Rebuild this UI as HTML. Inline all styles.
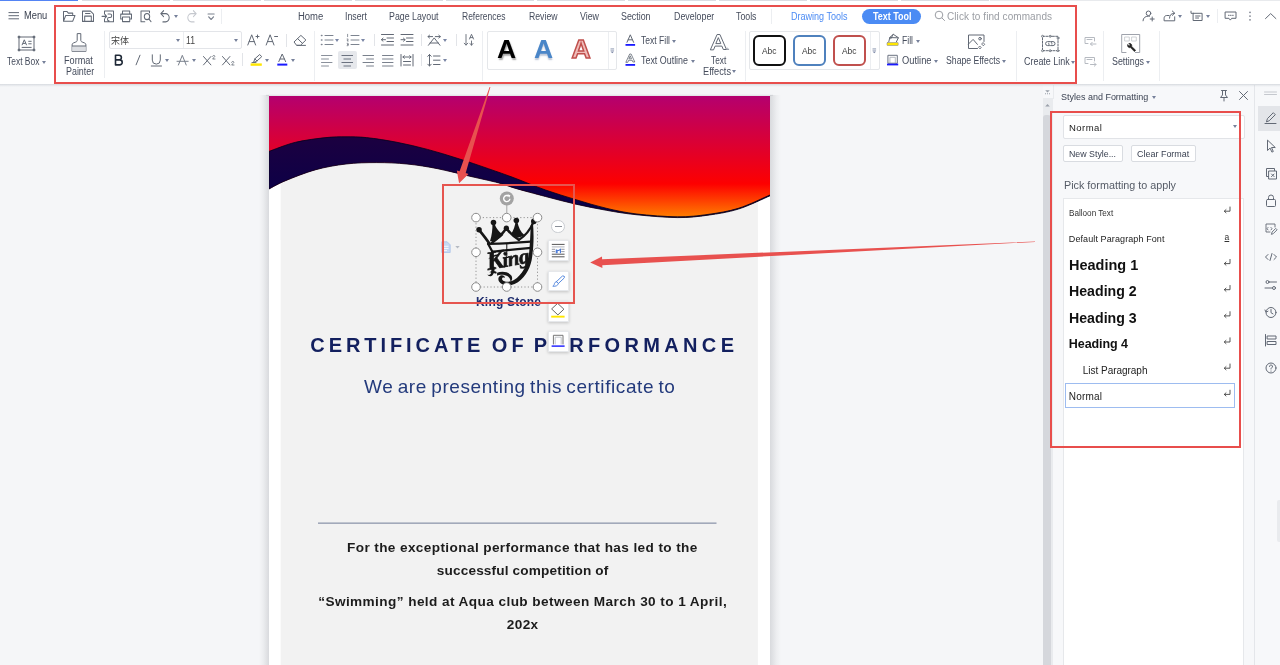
<!DOCTYPE html>
<html lang="en">
<head>
<meta charset="utf-8">
<title>Certificate - Text Tool</title>
<style>
*{box-sizing:border-box;margin:0;padding:0}
html,body{width:1280px;height:665px;overflow:hidden;background:#f5f6f8;font-family:"Liberation Sans","Noto Sans CJK SC",sans-serif;color:#333}
#app{position:relative;width:1280px;height:665px;overflow:hidden;will-change:transform}
.a{position:absolute}
.t{position:absolute;white-space:pre;line-height:1;color:#333}
svg{position:absolute;overflow:visible}
.vs{position:absolute;width:1px;background:#eceef1}
.caret{position:absolute;width:0;height:0;border-left:2.5px solid transparent;border-right:2.5px solid transparent;border-top:3px solid #76809a}
.fb{width:21px;height:20.8px;background:#fff;border:1px solid #e6e8eb;box-shadow:0 1px 3px rgba(0,0,0,.2)}
.kg{left:488.3px;top:247.1px;font-family:'Liberation Serif',serif;font-style:italic;font-weight:700;font-size:21px;line-height:30px;color:#161616;-webkit-text-stroke:.7px #161616;letter-spacing:-.3px;transform:rotate(-10deg);transform-origin:0 23.5px}
.kg::first-letter{font-size:26px;letter-spacing:-1.6px}
.redbox{position:absolute;border:2.2px solid #e84e4c}
</style>
</head>
<body>
<div id="app">
<!-- ===== top toolbar ===== -->
<div class="a" style="left:0;top:0;width:1280px;height:84px;background:#fff"></div>
<!-- tab strip remnants -->
<div class="a" style="left:0;top:0;width:78px;height:1.300px;background:#4a7df3;opacity:.95"></div>
<div class="a" style="left:82px;top:0;width:908px;height:1.300px;background:repeating-linear-gradient(90deg,#d9dce2 0,#d9dce2 88px,#fff 88px,#fff 91px)"></div>
<div class="a" style="left:990px;top:0;width:290px;height:1.300px;background:#e8eaed"></div>

<!-- hamburger -->
<svg style="left:8px;top:11px" width="12" height="10" viewBox="0 0 12 10"><path d="M0.5 1.6h10.5M0.5 4.7h10.5M0.5 7.8h10.5" stroke="#626975" stroke-width="1" fill="none"/></svg>

<!-- quick access icons -->
<svg style="left:62px;top:10px" width="160" height="13" viewBox="62 10 160 13" fill="none" stroke="#626975" stroke-width="1" stroke-linejoin="round" stroke-linecap="round"><g transform="translate(0 16.2) scale(1 1.14) translate(0 -16.1)">
  <!-- open -->
  <path d="M63.5 20.5v-8.5h3.6l1.2 1.4h4.4v2.1M63.5 20.5l2.2-5h9.3l-2.3 5z"/>
  <!-- save -->
  <path d="M82.5 11.7h8l3 2.6v6.4h-11zM84.7 20.5v-4.5h6.6v4.5M85.5 13.700h4.500"/>
  <!-- export -->
  <path d="M104.5 14v-2.5h9v9.5h-9v-2.3M102 16.2h4.6m-1.6-1.6l1.6 1.6l-1.6 1.6M108 14.2h2.2a1.5 1.5 0 0 1 0 3h-1.2a1.5 1.5 0 0 0 0 3"/>
  <!-- print -->
  <path d="M122.5 14.3v-2.8h7.2v2.8M122.5 18.6h-1.8v-4.3h10.8v4.3h-1.8M122.5 16.8h7.2v4h-7.2z"/>
  <!-- preview -->
  <path d="M149.5 13v-1.5h-8.5v9.5h3.8"/><circle cx="147" cy="16.4" r="2.7"/><path d="M149 18.6l2 2.2"/>
  <!-- undo -->
  <path d="M163.6 11.3l-2.8 2.6l2.8 2.6M161 13.9h4.6a3.6 3.6 0 0 1 0 7.2h-2.7"/>
  <!-- redo (disabled) -->
  <path d="M193.4 11.3l2.8 2.6l-2.8 2.6M196 13.9h-4.6a3.6 3.6 0 0 0 0 7.2h2.7" stroke="#c5c8ce"/>
  <!-- more -->
  <path d="M208 14.2h6.2M208.6 16.6l2.5 2.4l2.5-2.4" stroke="#7a818d"/>
</g></svg>
<div class="caret" style="left:174px;top:15px"></div>
<div class="vs" style="left:221px;top:9px;height:15px"></div>
<div class="vs" style="left:771px;top:9px;height:15px"></div>

<!-- Text Tool pill -->
<div class="a" style="left:862px;top:8.5px;width:58.5px;height:15.5px;border-radius:8px;background:#4b8bf4"></div>
<!-- search -->
<svg style="left:934px;top:10px" width="12" height="12" viewBox="0 0 12 12" fill="none" stroke="#9a9da3" stroke-width="1"><circle cx="5" cy="5" r="3.8"/><path d="M7.8 7.8l3 3"/></svg>

<!-- right top icons -->
<svg style="left:1140px;top:9px" width="140" height="14" viewBox="1140 9 140 14" fill="none" stroke="#626975" stroke-width="1" stroke-linecap="round" stroke-linejoin="round">
  <circle cx="1148.5" cy="13.3" r="2.3"/><path d="M1143 20.8c0-3 2.4-4.6 5.3-4.6h1.3M1150.2 19h4M1152.2 17v4"/>
  <path d="M1169 15.5h-2.3c-1.6 0-2.6 1.2-2.6 2.8v2.5h10.6v-4M1169.5 18.2c0-3.2 1.8-5 5-5M1172.3 11l2.4 2.2l-2.4 2.2"/>
  <path d="M1193.5 13.3h8.6v7.2h-8.6zM1191 11.2v2.1h2.5M1195.6 16h4.4M1195.6 18h3"/>
  <path d="M1225.5 12h10.5v6.3h-4.3l-1.4 1.8l-1.4-1.8h-3.4z"/><path d="M1228.5 15.2h.6M1230.5 15.2h.6M1232.6 15.2h.6" stroke-width="1.1"/>
  <path d="M1250 12.3v.2M1250 16v.2M1250 19.7v.2" stroke-width="1.5" stroke="#6b7280"/>
  <path d="M1265.5 18.6l5.2-5l5.2 5"/>
</svg>
<div class="caret" style="left:1178px;top:15px"></div>
<div class="caret" style="left:1206px;top:15px"></div>
<div class="vs" style="left:1217px;top:9px;height:14px"></div>

<!-- ===== ribbon ===== -->
<!-- Text Box -->
<svg style="left:17px;top:35px" width="19" height="17" viewBox="0 0 19 17" fill="none" stroke="#626975" stroke-width="1"><rect x="2" y="2" width="15" height="13"/><circle cx="2" cy="2" r="1" fill="#626975"/><circle cx="17" cy="2" r="1" fill="#626975"/><circle cx="2" cy="15" r="1" fill="#626975"/><circle cx="17" cy="15" r="1" fill="#626975"/><path d="M5 10.2l2.3-5.4l2.3 5.4M5.9 8.4h2.8M11.3 6.3h3.3M11.3 8.8h3.3M4.7 12.4h9.9"/></svg>
<div class="caret" style="left:41.5px;top:60.5px"></div>
<!-- Format painter -->
<svg style="left:71px;top:33px" width="16" height="20" viewBox="0 0 16 20" fill="none" stroke="#626975" stroke-width="1" stroke-linejoin="round"><path d="M6.2 0.6h3.6v6.6c0 1 .4 1.4 1.4 1.8l2.4 1c.9.4 1.3.9 1.3 1.8v6.7h-13.8v-6.7c0-.9.4-1.4 1.3-1.8l2.4-1c1-.4 1.4-.8 1.4-1.8z"/><path d="M1.2 13.3h13.6v5h-13.6z" fill="#dcdee2" stroke="none"/><path d="M1.1 13h13.8"/></svg>
<div class="vs" style="left:104px;top:31px;height:47px;background:#eceef1"></div>

<!-- font boxes -->
<div class="a" style="left:109px;top:31px;width:133px;height:18px;border:1px solid #e3e5e9;border-radius:2px;background:#fff"></div>
<div class="vs" style="left:183px;top:32px;height:16px"></div>
<div class="caret" style="left:176px;top:38.5px"></div>
<div class="caret" style="left:234px;top:38.5px"></div>

<svg style="left:109px;top:30px" width="380" height="42" viewBox="109 30 380 42" fill="none" stroke="#626975" stroke-width="1" stroke-linecap="round" stroke-linejoin="round">
  <!-- A+ -->
  <path d="M247.8 45l3.9-10.2l3.9 10.2M249.2 41.6h5M256 36.5h3M257.5 35v3"/>
  <!-- A- -->
  <path d="M266.2 45l3.9-10.2l3.9 10.2M267.6 41.6h5M274.6 36.5h3"/>
  <!-- eraser -->
  <path d="M294.3 41.7l6.6-6.3l5 4.6l-5.4 5.3h-3.5zM297.6 38.6l4.8 4.7M297 45.4h8.5"/>
  <!-- I -->
  <path d="M140 55.2l-3.900 9.600"/>
  <!-- U -->
  <path d="M152.300 54.800v5.300a4 4 0 0 0 8 0v-5.300M151.300 66h10.200"/>
  <!-- A strike -->
  <path d="M178.4 65l3.9-9.7l3.9 9.7M177 61.3h11.2" stroke="#7a818d"/>
  <!-- X2 -->
  <path d="M203.5 56.5l7.4 8.4M210.9 56.5l-7.4 8.4"/><path d="M212.6 56.3c.2-1.2 2.2-1.2 2.2 0c0 .9-1.5 1.6-2.2 2.7h2.4" stroke-width=".8"/>
  <!-- X_2 -->
  <path d="M222.5 56.5l7.4 8.4M229.9 56.5l-7.4 8.4"/><path d="M231.6 62.3c.2-1.2 2.2-1.2 2.2 0c0 .9-1.5 1.6-2.2 2.7h2.4" stroke-width=".8"/>
  <!-- highlighter -->
  <path d="M253.6 62.2l1.3-3.4l4.8-4.3l2 2.2l-4.8 4.3zM254.9 58.8l2 2.2M252 62.6h4"/>
  <rect x="250.6" y="63.4" width="11.2" height="2.4" fill="#ffe600" stroke="none"/>
  <!-- font color -->
  <path d="M278.8 61.6l3.4-7.6l3.4 7.6M280 59h4.4"/>
  <rect x="277.3" y="63.6" width="10" height="2" fill="#1a1aff" stroke="none"/>
  <!-- bullets -->
  <g stroke-width="1" stroke="#7d8490"><path d="M325 35.5h8M325 40h8M325 44.5h8"/><path d="M321.5 35.5h.4M321.5 40h.4M321.5 44.5h.4" stroke-width="1.6"/></g>
  <!-- numbering -->
  <path d="M351 35.5h8M351 40h8M351 44.5h8" stroke="#7d8490"/><path d="M347.6 34.3v2.4M347.1 39h1.1l-1.1 2h1.2M347.1 43.3h1.1v2.4h-1.1M347.4 44.5h.8" stroke-width=".7"/>
  <!-- outdent -->
  <path d="M381.5 34.5h12M387 38h6.5M387 41.5h6.5M381.5 45h12M381.5 39.7h4M383 38.2l-1.6 1.5l1.6 1.5"/>
  <!-- indent -->
  <path d="M401 34.5h12M406.5 38h6.5M406.5 41.5h6.5M401 45h12M401 39.7h4M403.5 38.2l1.6 1.5l-1.6 1.5"/>
  <!-- asian layout -->
  <path d="M428 36.600h4.600M429.500 35.200l-1.500 1.400l1.500 1.400M435.300 36.600h5M438.800 35.200l1.500 1.400l-1.500 1.400M428.400 45.300l5.800-7.400l5.800 7.400M430 43h8.400"/>
  <!-- sort -->
  <path d="M466 34.5v10.5M464.2 43.2l1.8 1.9l1.8-1.9M469.5 39l2-4.7l2 4.7M470.2 37.6h2.6M471.500 41v4.200M470 43.5l1.5 1.700l1.500-1.700" stroke-width=".9"/>
  <!-- align left -->
  <path d="M321.500 55.500h10.500M321.500 59h7M321.500 62.500h10.500M321.500 66h7" stroke="#8a909b"/>
  <!-- align right -->
  <path d="M363 55.500h10.500M366.500 59h7M363 62.500h10.500M366.500 66h7" stroke="#7a818d"/>
  <!-- justify -->
  <path d="M382.500 55.500h10.500M382.500 59h10.500M382.500 62.500h10.500M382.500 66h10.500" stroke="#7a818d"/>
  <!-- distributed -->
  <path d="M401 54.500v11.500M413 54.500v11.500M403 57h8M404.300 55.700l-1.400 1.300l1.400 1.300M409.700 55.700l1.400 1.300l-1.400 1.300M403.500 61.500h7M403.500 65h7"/>
  <!-- line spacing -->
  <path d="M429.500 54.500v11.500M427.800 56.300l1.700-1.800l1.700 1.800M427.800 64.200l1.700 1.800l1.700-1.800M433.500 56h6.500M433.500 60.200h6.500M433.500 64.500h6.500"/>
</svg>
<!-- B -->
<svg style="left:114px;top:54px" width="10" height="12" viewBox="0 0 10 12" fill="none" stroke="#1f2937" stroke-width="1.6" stroke-linejoin="round"><path d="M1.500 1.300h3.600a2.300 2.300 0 0 1 0 4.600h-3.600zM1.500 5.900h4.200a2.500 2.500 0 0 1 0 5h-4.200z"/></svg>
<!-- align center selected -->
<div class="a" style="left:338px;top:50.500px;width:19px;height:18.500px;background:#e6e8ec;border-radius:2px"></div>
<svg style="left:341px;top:54px" width="13" height="13" viewBox="0 0 13 13" fill="none" stroke="#6b7280" stroke-width="1"><path d="M0.500 1.500h11.500M2.500 5h7.500M0.500 8.500h11.500M2.500 12h7.500"/></svg>

<div class="vs" style="left:242px;top:53px;height:13px;background:#e2e4e8"></div>
<div class="vs" style="left:286px;top:33.500px;height:13px;background:#e2e4e8"></div>
<div class="vs" style="left:313.500px;top:31px;height:50px"></div>
<div class="vs" style="left:374px;top:34px;height:12px;background:#e2e4e8"></div>
<div class="vs" style="left:420.500px;top:34px;height:12px;background:#e2e4e8"></div>
<div class="vs" style="left:420.500px;top:54px;height:12px;background:#e2e4e8"></div>
<div class="vs" style="left:455.500px;top:34px;height:12px;background:#e2e4e8"></div>
<div class="vs" style="left:482px;top:31px;height:50px"></div>
<div class="caret" style="left:165px;top:59px"></div>
<div class="caret" style="left:191.500px;top:59px"></div>
<div class="caret" style="left:264.500px;top:59px"></div>
<div class="caret" style="left:291px;top:59px"></div>
<div class="caret" style="left:335px;top:39px;border-top-color:#7a86a5"></div>
<div class="caret" style="left:361px;top:39px;border-top-color:#7a86a5"></div>
<div class="caret" style="left:443px;top:39px;border-top-color:#7a86a5"></div>
<div class="caret" style="left:443px;top:59px;border-top-color:#7a86a5"></div>

<!-- WordArt gallery -->
<div class="a" style="left:487px;top:31px;width:129.500px;height:39px;border:1px solid #e5e7ea;border-radius:2px;background:#fff"></div>
<div class="vs" style="left:608px;top:32px;height:37px;background:#eceef1"></div>
<svg style="left:610.300px;top:47.500px" width="5" height="6" viewBox="0 0 5 6" fill="none" stroke="#7a86a5" stroke-width=".7"><path d="M0.500 .8h3.600M0.500 2.200h3.600"/><path d="M.5 3.400l1.800 1.900l1.800-1.900z" fill="#7a86a5" stroke="none"/></svg>

<!-- text fill / outline / effects icons -->
<svg style="left:624px;top:33px" width="112" height="36" viewBox="624 33 112 36" fill="none" stroke="#626975" stroke-width="1" stroke-linejoin="round" stroke-linecap="round">
  <path d="M627 42.300l3.300-7.500l3.300 7.500M628.200 39.800h4.200"/>
  <rect x="625.500" y="44" width="9.600" height="1.800" fill="#1a1aff" stroke="none"/>
  <path d="M626 62l3.700-8h1.400l3.700 8h-1.900l-.7-1.700h-3.600l-.7 1.700zM629.300 58.800h2.200l-1.100-2.600z" stroke-width=".8"/>
  <rect x="625.500" y="64" width="9.600" height="1.800" fill="#1a1aff" stroke="none"/>
  <path d="M710.500 49.500l6.600-15h2.800l6.600 15h-3.200l-1.400-3.400h-6.800l-1.400 3.400zM716.200 43.600h4.600l-2.300-5.600z"/>
  <path d="M727.400 49.500h1.300M727.500 48l1 1.500" stroke="#9aa0aa"/>
</svg>
<div class="caret" style="left:672px;top:39.500px"></div>
<div class="caret" style="left:690.500px;top:59.500px"></div>
<div class="caret" style="left:732px;top:70px"></div>
<div class="vs" style="left:744.500px;top:31px;height:50px"></div>

<!-- shape style gallery -->
<div class="a" style="left:749px;top:31px;width:130.500px;height:39px;border:1px solid #e5e7ea;border-radius:2px;background:#fff"></div>
<div class="vs" style="left:869.500px;top:32px;height:37px;background:#eceef1"></div>
<div class="a" style="left:752.700px;top:35.200px;width:33.300px;height:30.800px;border:2px solid #111;border-radius:6px;background:#fff"></div>
<div class="a" style="left:792.500px;top:35.200px;width:33.500px;height:30.800px;border:2px solid #4f81bd;border-radius:6px;background:#fff"></div>
<div class="a" style="left:832.500px;top:35.200px;width:33.500px;height:30.800px;border:2px solid #c0504d;border-radius:6px;background:#fff"></div>
<svg style="left:872.300px;top:47.500px" width="5" height="6" viewBox="0 0 5 6" fill="none" stroke="#7a86a5" stroke-width=".7"><path d="M0.500 .8h3.600M0.500 2.200h3.600"/><path d="M.5 3.400l1.800 1.900l1.800-1.900z" fill="#7a86a5" stroke="none"/></svg>

<!-- fill / outline / shape effects / create link / settings icons -->
<svg style="left:885px;top:33px" width="260" height="36" viewBox="885 33 260 36" fill="none" stroke="#626975" stroke-width="1" stroke-linejoin="round" stroke-linecap="round">
  <path d="M888.800 41.800l1-4.400l3.500-3.100l5.100 3.400l-2 4.100M889.800 37.600l8.400.2M893.300 34.300l-2.600 4.500"/>
  <rect x="887" y="42.500" width="11.200" height="3" rx=".6" fill="#ffe600" stroke="#8a8f98" stroke-width=".6"/>
  <rect x="888.300" y="55.300" width="9" height="8" stroke="#6b7280"/><rect x="890.300" y="57.300" width="5" height="6" stroke="#a2a7b0" stroke-width=".8"/>
  <rect x="887" y="63.600" width="11.200" height="1.800" fill="#1a1aff" stroke="none"/>
  <!-- shape effects -->
  <path d="M984 41.500v-6.500h-15.500v13.500h9M968.500 44l4.600-4.600l4.300 5"/><circle cx="980" cy="38.700" r="1.300"/><path d="M983.300 42.800l1.400 1.500l-1.400 1.500l-1.400-1.500zM980 46.300l1.200 1.300l-1.200 1.300l-1.200-1.300z" stroke-width=".9"/>
  <!-- create link -->
  <rect x="1042.500" y="36.300" width="15.500" height="14.400" stroke-dasharray="2 1.300"/><g stroke-width=".8"><circle cx="1042.500" cy="36.300" r="1" fill="#fff"/><circle cx="1050.200" cy="36.300" r="1" fill="#fff"/><circle cx="1058" cy="38" r="1" fill="#fff"/><circle cx="1042.500" cy="50.700" r="1" fill="#fff"/><circle cx="1050.200" cy="50.700" r="1" fill="#fff"/><circle cx="1058" cy="50.700" r="1" fill="#fff"/></g>
  <path d="M1049.300 45.600h-1.700a2 2 0 0 1 0-4h2.400a2 2 0 0 1 1.900 2.500M1051.300 41.600h1.700a2 2 0 0 1 0 4h-2.400a2 2 0 0 1-1.900-2.500"/>
  <!-- two disabled icons -->
  <g stroke="#b6bac1"><path d="M1094.500 41v-3.500h-9.500v6h3M1087 39.500h5M1096 44h-5.500m1.700-1.700l-1.700 1.700l1.700 1.700"/><path d="M1094.500 61v-3.500h-9.500v6h3M1087 59.500h5M1090.500 64.500h5.500m-1.700-1.700l1.700 1.700l-1.700 1.700"/></g>
  <!-- settings -->
  <path d="M1126 52.500h-4.300v-18h18v18h-4.300" stroke="#9499a3" stroke-width=".9"/><rect x="1125" y="37" width="4.300" height="4" stroke="#c3c6cc" stroke-width=".8"/><rect x="1132" y="37" width="4.300" height="4" stroke="#c3c6cc" stroke-width=".8"/>
  <path d="M1127.600 44.700a2.300 2.300 0 0 0 2.900 2.900l3.900 4l1.300-1.300l-4-3.900a2.300 2.300 0 0 0-2.900-2.900l1.400 1.400l-1 1z" fill="#222" stroke="#222" stroke-width=".6"/>
</svg>
<div class="caret" style="left:915.500px;top:39.500px"></div>
<div class="caret" style="left:933.500px;top:59.500px"></div>
<div class="caret" style="left:1002px;top:59.500px"></div>
<div class="caret" style="left:1070.500px;top:60.500px"></div>
<div class="caret" style="left:1145.500px;top:60.500px"></div>
<div class="vs" style="left:1016px;top:31px;height:50px"></div>
<div class="vs" style="left:1103px;top:31px;height:50px"></div>
<div class="vs" style="left:1159px;top:31px;height:50px;background:#eceef1"></div>
<!-- WordArt samples -->
<span class="t" style="left:497px;top:35.500px;font-size:26.500px;font-weight:700;color:#000;text-shadow:1px 1.500px 1.500px rgba(0,0,0,.35)">A</span>
<span class="t" style="left:534px;top:35.500px;font-size:26.500px;font-weight:700;color:#4a86c8;text-shadow:0 1.500px 1.500px rgba(60,90,140,.35)">A</span>
<span class="t" style="left:571.500px;top:35.500px;font-size:26.500px;font-weight:700;color:#efbcb9;-webkit-text-stroke:1.500px #c0504d">A</span>

<!-- ===== document workspace ===== -->
<div class="a" style="left:0;top:85px;width:1043px;height:580px;background:#f5f6f8"></div>
<!-- page side shadows -->
<div class="a" style="left:259px;top:95px;width:10px;height:570px;background:linear-gradient(90deg,rgba(140,143,150,0),rgba(140,143,150,.08) 40%,rgba(140,143,150,.27))"></div>
<div class="a" style="left:770px;top:95px;width:11px;height:570px;background:linear-gradient(270deg,rgba(140,143,150,0),rgba(140,143,150,.08) 40%,rgba(140,143,150,.27))"></div>
<div class="a" style="left:266px;top:93.5px;width:507px;height:2.5px;background:linear-gradient(0deg,rgba(140,143,150,.2),rgba(140,143,150,0))"></div>
<!-- page -->
<div class="a" style="left:269px;top:96px;width:501px;height:569px;background:#fff"></div>
<svg width="501" height="569" viewBox="269 96 501 569" style="left:269px;top:96px;overflow:hidden">
  <defs>
    <linearGradient id="gr" x1="0" y1="96" x2="0" y2="218" gradientUnits="userSpaceOnUse">
      <stop offset="0" stop-color="#b4006f"/>
      <stop offset=".72" stop-color="#fd0000"/>
      <stop offset="1" stop-color="#ff8200"/>
    </linearGradient>
    <linearGradient id="nv" x1="0" y1="135" x2="0" y2="215" gradientUnits="userSpaceOnUse">
      <stop offset="0" stop-color="#1c0040"/>
      <stop offset="1" stop-color="#06004a"/>
    </linearGradient>
    <clipPath id="pc"><rect x="280.7" y="96" width="477.2" height="569"/></clipPath>
  </defs>
  <!-- grey inner panel -->
  <rect x="280.7" y="230" width="477.2" height="435" fill="#f2f2f2"/>
  <path d="M269.0 151.4C273.4 149.9 286.0 144.6 295.5 142.3C305.0 140.0 317.6 138.5 326.0 137.6C334.4 136.7 339.2 136.8 346.0 136.8C352.8 136.8 358.0 136.7 366.5 137.6C375.0 138.5 386.8 140.3 397.0 142.3C407.2 144.3 417.3 146.7 427.5 149.4C437.7 152.1 447.9 155.3 458.0 158.5C468.1 161.7 478.9 165.4 488.4 168.7C497.9 172.0 505.5 174.6 515.0 178.2C524.5 181.8 535.3 186.4 545.5 190.0C555.7 193.6 565.9 196.6 576.0 199.7C586.1 202.8 596.2 205.9 606.4 208.3C616.6 210.7 625.1 212.6 637.0 214.0C648.9 215.4 665.7 216.7 677.5 216.8C689.3 216.9 697.9 215.8 708.0 214.4C718.1 213.0 728.1 211.5 738.4 208.3C748.7 205.1 764.7 197.2 770.0 195.0V240H269Z" fill="#f2f2f2" clip-path="url(#pc)"/>
  <!-- red gradient banner -->
  <path d="M269 96H770V195.8L770.0 195.8C764.7 198.0 748.7 205.9 738.4 209.1C728.1 212.3 718.1 213.8 708.0 215.2C697.9 216.6 689.3 217.7 677.5 217.6C665.7 217.5 648.9 216.0 637.0 214.8C625.1 213.6 616.6 212.1 606.4 210.3C596.2 208.5 586.1 206.5 576.0 204.2C565.9 201.9 555.7 199.2 545.5 196.5C535.3 193.8 522.8 190.5 515.0 188.2C507.2 185.9 506.4 185.0 498.6 182.9C490.8 180.8 478.1 178.2 468.0 175.8C457.9 173.4 447.9 170.7 437.7 168.7C427.5 166.7 417.2 165.0 407.0 164.0C396.8 163.0 386.9 162.6 376.7 162.6C366.5 162.6 356.1 162.8 346.0 164.0C335.9 165.2 326.0 166.9 315.8 169.7C305.6 172.5 292.8 177.7 285.0 180.9C277.2 184.1 271.7 187.7 269.0 189.0Z" fill="url(#gr)"/>
  <!-- navy band -->
  <path d="M269.0 151.4C273.4 149.9 286.0 144.6 295.5 142.3C305.0 140.0 317.6 138.5 326.0 137.6C334.4 136.7 339.2 136.8 346.0 136.8C352.8 136.8 358.0 136.7 366.5 137.6C375.0 138.5 386.8 140.3 397.0 142.3C407.2 144.3 417.3 146.7 427.5 149.4C437.7 152.1 447.9 155.3 458.0 158.5C468.1 161.7 478.9 165.4 488.4 168.7C497.9 172.0 505.5 174.6 515.0 178.2C524.5 181.8 535.3 186.4 545.5 190.0C555.7 193.6 565.9 196.6 576.0 199.7C586.1 202.8 596.2 205.9 606.4 208.3C616.6 210.7 625.1 212.6 637.0 214.0C648.9 215.4 665.7 216.7 677.5 216.8C689.3 216.9 697.9 215.8 708.0 214.4C718.1 213.0 728.1 211.5 738.4 208.3C748.7 205.1 764.7 197.2 770.0 195.0L770 195.8C764.7 198.0 748.7 205.9 738.4 209.1C728.1 212.3 718.1 213.8 708.0 215.2C697.9 216.6 689.3 217.7 677.5 217.6C665.7 217.5 648.9 216.0 637.0 214.8C625.1 213.6 616.6 212.1 606.4 210.3C596.2 208.5 586.1 206.5 576.0 204.2C565.9 201.9 555.7 199.2 545.5 196.5C535.3 193.8 522.8 190.5 515.0 188.2C507.2 185.9 506.4 185.0 498.6 182.9C490.8 180.8 478.1 178.2 468.0 175.8C457.9 173.4 447.9 170.7 437.7 168.7C427.5 166.7 417.2 165.0 407.0 164.0C396.8 163.0 386.9 162.6 376.7 162.6C366.5 162.6 356.1 162.8 346.0 164.0C335.9 165.2 326.0 166.9 315.8 169.7C305.6 172.5 292.8 177.7 285.0 180.9C277.2 184.1 271.7 187.7 269.0 189.0Z" fill="url(#nv)" stroke="#06001c" stroke-width=".8"/>
  <!-- divider line -->
  <rect x="318" y="522.5" width="398.5" height="1.3" fill="#8e97ac"/>
</svg>

<!-- ===== right task pane ===== -->
<div class="a" style="left:1043px;top:85px;width:237px;height:580px;background:#f7f8fa"></div>
<!-- doc vertical scrollbar -->
<div class="a" style="left:1042.6px;top:98px;width:10.4px;height:567px;background:#e9ebee"></div>
<div class="a" style="left:1043.4px;top:114.5px;width:8px;height:560px;background:#d5d7dc;border-radius:3px 3px 0 0"></div>
<div class="a" style="left:1053px;top:85px;width:1px;height:14px;background:#e9ebee"></div>
<svg style="left:1043px;top:88px" width="9" height="22" viewBox="0 0 9 22" fill="#9aa0aa"><path d="M2.200 2.200h4.600l-2.300 2.200zM2 5.300h1v.9h-1zM4 5.300h1v.9h-1zM6 5.300h1v.9h-1zM4.500 16l2.300 2.600h-4.600z"/></svg>
<!-- header icons -->
<div class="caret" style="left:1151.500px;top:95.500px"></div>
<svg style="left:1218px;top:89px" width="32" height="14" viewBox="1218 89 32 14" fill="none" stroke="#626975" stroke-width="1" stroke-linecap="round" stroke-linejoin="round"><path d="M1221.500 90.500h5M1222.500 90.500v4.500l-2 2.500h7l-2-2.500v-4.500M1224 97.500v3.500"/><path d="M1239.500 91.500l8 8M1247.500 91.500l-8 8"/></svg>
<!-- combo -->
<div class="a" style="left:1063px;top:114.600px;width:181.500px;height:24px;background:#fff;border:1px solid #e1e3e7;border-radius:2px"></div>
<div class="caret" style="left:1232.500px;top:125px"></div>
<!-- buttons -->
<div class="a" style="left:1063.300px;top:144.700px;width:59.500px;height:17.300px;background:#fff;border:1px solid #d9dce1;border-radius:2px"></div>
<div class="a" style="left:1131px;top:144.700px;width:64.500px;height:17.300px;background:#fff;border:1px solid #d9dce1;border-radius:2px"></div>
<!-- list -->
<div class="a" style="left:1063px;top:198px;width:181px;height:480px;background:#fff;border:1px solid #e6e8eb"></div>
<div class="a" style="left:1065px;top:383px;width:169.500px;height:25px;border:1px solid #9dbcf0;background:#fff"></div>
<svg style="left:1220px;top:205px" width="14" height="200" viewBox="1220 205 14 200" fill="none" stroke="#444" stroke-width=".9" stroke-linejoin="round" stroke-linecap="round">
  <g id="ret"><path d="M1230 207v4.200h-5.600M1226 209.600l-1.700 1.600l1.700 1.600" /></g>
  <use href="#ret" y="52.400"/><use href="#ret" y="78.500"/><use href="#ret" y="104.700"/><use href="#ret" y="130.800"/><use href="#ret" y="157"/><use href="#ret" y="183.200"/>
</svg>
<span class="t" style="left:1224.500px;top:232.500px;font-size:8.500px;color:#333;text-decoration:underline">a</span>
<!-- right icon strip -->
<div class="a" style="left:1254px;top:85px;width:1px;height:580px;background:#e4e6ea"></div>
<div class="a" style="left:1258px;top:106px;width:22px;height:25px;background:#e3e5e9"></div>
<svg style="left:1258px;top:88px" width="22" height="290" viewBox="1258 88 22 290" fill="none" stroke="#626975" stroke-width="1" stroke-linecap="round" stroke-linejoin="round">
  <path d="M1264.500 92h12M1264.500 94.500h12" stroke="#c5c8ce"/>
  <path d="M1266.500 121.500l1-3l5.800-5.800l2 2l-5.800 5.800zM1265 123.500h11"/>
  <path d="M1267.500 140.500v10l2.600-2.400l1.800 4l1.400-.6l-1.800-4h3.400z"/>
  <path d="M1268.500 176.500h-2v-8h8v2M1269 171h7.500v8h-7.500zM1271.500 174l2.600 2.600M1274.100 174l-2.600 2.600"/>
  <rect x="1266.500" y="199.500" width="9" height="7" rx="1"/><path d="M1268.500 199.500v-2a2.500 2.500 0 0 1 5 0v2"/>
  <path d="M1275 227v-3h-9v8h4M1268 227.500l-1 1.200l1 1.200M1271 227.500l1 1.200l-1 1.200M1271.500 234l.6-2l3.600-3.600l1.400 1.400l-3.600 3.600z" stroke-width=".9"/>
  <path d="M1268 254.500l-2.500 2.500l2.500 2.500M1274 254.500l2.500 2.500l-2.500 2.500M1272 253.500l-2 7"/>
  <circle cx="1267.500" cy="282" r="1.500"/><path d="M1269 282h7.500M1265 288h7.500"/><circle cx="1274" cy="288" r="1.500"/>
  <circle cx="1271" cy="312.500" r="5"/><path d="M1271 309.500v3.200l2 1.200M1265 310l1 2.200l2-1"/>
  <path d="M1267.500 336h8.500v3h-8.500zM1267.500 341.500h8.500v3h-8.500zM1265.500 334.500v11.500"/>
  <circle cx="1271" cy="368" r="5"/><path d="M1269.500 366.500a1.500 1.500 0 1 1 2.200 1.300c-.5.300-.7.600-.7 1.200M1271 371v.2"/>
</svg>
<div class="a" style="left:1277px;top:499.5px;width:3px;height:42px;background:#e9ebee;border-radius:2px 0 0 2px"></div>
<!-- toolbar bottom soft edge -->
<div class="a" style="left:0;top:84px;width:1280px;height:2.5px;background:linear-gradient(180deg,rgba(190,195,203,.55),rgba(190,195,203,.2) 55%,rgba(190,195,203,0))"></div>

<span class="t" style="left:24.0px;top:10px;font-size:10px;line-height:11px;color:#3a4150;transform:scaleX(0.9314);transform-origin:0 0;">Menu</span>
<span class="t" style="left:298.4px;top:11px;font-size:10px;line-height:11px;color:#454c5c;transform:scaleX(0.9480);transform-origin:0 0;">Home</span>
<span class="t" style="left:345.3px;top:11px;font-size:10px;line-height:11px;color:#454c5c;transform:scaleX(0.8755);transform-origin:0 0;">Insert</span>
<span class="t" style="left:389.3px;top:11px;font-size:10px;line-height:11px;color:#454c5c;transform:scaleX(0.8812);transform-origin:0 0;">Page Layout</span>
<span class="t" style="left:461.5px;top:11px;font-size:10px;line-height:11px;color:#454c5c;transform:scaleX(0.8506);transform-origin:0 0;">References</span>
<span class="t" style="left:529.0px;top:11px;font-size:10px;line-height:11px;color:#454c5c;transform:scaleX(0.8690);transform-origin:0 0;">Review</span>
<span class="t" style="left:580.0px;top:11px;font-size:10px;line-height:11px;color:#454c5c;transform:scaleX(0.8837);transform-origin:0 0;">View</span>
<span class="t" style="left:620.5px;top:11px;font-size:10px;line-height:11px;color:#454c5c;transform:scaleX(0.8843);transform-origin:0 0;">Section</span>
<span class="t" style="left:673.7px;top:11px;font-size:10px;line-height:11px;color:#454c5c;transform:scaleX(0.8839);transform-origin:0 0;">Developer</span>
<span class="t" style="left:736.0px;top:11px;font-size:10px;line-height:11px;color:#454c5c;transform:scaleX(0.8776);transform-origin:0 0;">Tools</span>
<span class="t" style="left:790.5px;top:11px;font-size:10px;line-height:11px;color:#4b8bf4;transform:scaleX(0.9022);transform-origin:0 0;">Drawing Tools</span>
<span class="t" style="left:873.0px;top:11px;font-size:10px;line-height:11px;font-weight:700;color:#ffffff;transform:scaleX(0.8960);transform-origin:0 0;">Text Tool</span>
<span class="t" style="left:947.0px;top:11px;font-size:10px;line-height:11px;color:#9a9da3;letter-spacing:0.08px;">Click to find commands</span>
<span class="t" style="left:7.0px;top:56px;font-size:10px;line-height:11px;color:#454c5c;transform:scaleX(0.8446);transform-origin:0 0;">Text Box</span>
<span class="t" style="left:64.3px;top:55px;font-size:10px;line-height:11px;color:#454c5c;transform:scaleX(0.9125);transform-origin:0 0;">Format</span>
<span class="t" style="left:65.6px;top:66px;font-size:10px;line-height:11px;color:#454c5c;transform:scaleX(0.8899);transform-origin:0 0;">Painter</span>
<span class="t" style="left:111.0px;top:35px;font-size:9.5px;line-height:11px;color:#444;transform:scaleX(0.9466);transform-origin:0 0;">宋体</span>
<span class="t" style="left:186.0px;top:35px;font-size:10px;line-height:11px;color:#444;transform:scaleX(0.8662);transform-origin:0 0;">11</span>
<span class="t" style="left:640.5px;top:35px;font-size:10px;line-height:11px;color:#454c5c;transform:scaleX(0.8553);transform-origin:0 0;">Text Fill</span>
<span class="t" style="left:640.5px;top:55px;font-size:10px;line-height:11px;color:#454c5c;transform:scaleX(0.8899);transform-origin:0 0;">Text Outline</span>
<span class="t" style="left:710.7px;top:55px;font-size:10px;line-height:11px;color:#454c5c;transform:scaleX(0.8341);transform-origin:0 0;">Text</span>
<span class="t" style="left:703.0px;top:66px;font-size:10px;line-height:11px;color:#454c5c;transform:scaleX(0.9213);transform-origin:0 0;">Effects</span>
<span class="t" style="left:762.0px;top:46px;font-size:9px;line-height:10px;color:#3a3a3a;transform:scaleX(0.9345);transform-origin:0 0;">Abc</span>
<span class="t" style="left:802.0px;top:46px;font-size:9px;line-height:10px;color:#3a3a3a;transform:scaleX(0.9345);transform-origin:0 0;">Abc</span>
<span class="t" style="left:842.0px;top:46px;font-size:9px;line-height:10px;color:#3a3a3a;transform:scaleX(0.9345);transform-origin:0 0;">Abc</span>
<span class="t" style="left:902.0px;top:35px;font-size:10px;line-height:11px;color:#454c5c;transform:scaleX(0.8606);transform-origin:0 0;">Fill</span>
<span class="t" style="left:902.0px;top:55px;font-size:10px;line-height:11px;color:#454c5c;transform:scaleX(0.9310);transform-origin:0 0;">Outline</span>
<span class="t" style="left:946.0px;top:55px;font-size:10px;line-height:11px;color:#454c5c;transform:scaleX(0.8697);transform-origin:0 0;">Shape Effects</span>
<span class="t" style="left:1024.0px;top:56px;font-size:10px;line-height:11px;color:#454c5c;transform:scaleX(0.8936);transform-origin:0 0;">Create Link</span>
<span class="t" style="left:1112.0px;top:56px;font-size:10px;line-height:11px;color:#454c5c;transform:scaleX(0.8854);transform-origin:0 0;">Settings</span>
<span class="t" style="left:1060.7px;top:91px;font-size:9.5px;line-height:11px;color:#3b4252;transform:scaleX(0.9447);transform-origin:0 0;">Styles and Formatting</span>
<span class="t" style="left:1069.0px;top:122px;font-size:9.5px;line-height:11px;color:#222;letter-spacing:0.47px;">Normal</span>
<span class="t" style="left:1069.3px;top:148px;font-size:9.5px;line-height:11px;color:#3b4252;transform:scaleX(0.9273);transform-origin:0 0;">New Style...</span>
<span class="t" style="left:1137.0px;top:148px;font-size:9.5px;line-height:11px;color:#3b4252;transform:scaleX(0.9434);transform-origin:0 0;">Clear Format</span>
<span class="t" style="left:1063.8px;top:179px;font-size:11px;line-height:12px;color:#555b66;transform:scaleX(0.9795);transform-origin:0 0;">Pick formatting to apply</span>
<span class="t" style="left:1068.8px;top:208px;font-size:8.5px;line-height:10px;transform:scaleX(0.9576);transform-origin:0 0;">Balloon Text</span>
<span class="t" style="left:1068.8px;top:234px;font-size:9px;line-height:10px;color:#222;letter-spacing:0.10px;">Default Paragraph Font</span>
<span class="t" style="left:1068.8px;top:256px;font-size:15px;line-height:17px;font-weight:700;color:#111;transform:scaleX(0.9653);transform-origin:0 0;">Heading 1</span>
<span class="t" style="left:1068.8px;top:283px;font-size:14.5px;line-height:16px;font-weight:700;color:#111;transform:scaleX(0.9770);transform-origin:0 0;">Heading 2</span>
<span class="t" style="left:1068.8px;top:310px;font-size:14.5px;line-height:16px;font-weight:700;color:#111;transform:scaleX(0.9770);transform-origin:0 0;">Heading 3</span>
<span class="t" style="left:1068.8px;top:337px;font-size:12.5px;line-height:14px;font-weight:700;color:#111;letter-spacing:-0.07px;">Heading 4</span>
<span class="t" style="left:1082.8px;top:365px;font-size:10px;line-height:11px;color:#222;letter-spacing:-0.03px;">List Paragraph</span>
<span class="t" style="left:1068.8px;top:391px;font-size:10px;line-height:11px;color:#222;letter-spacing:0.19px;">Normal</span>
<span class="t" style="left:310.3px;top:334px;font-size:20px;line-height:22px;font-weight:700;color:#13205f;letter-spacing:3.93px;font-family:'Liberation Sans', sans-serif;">CERTIFICATE</span>
<span class="t" style="left:491.7px;top:334px;font-size:20px;line-height:22px;font-weight:700;color:#13205f;letter-spacing:4.22px;font-family:'Liberation Sans', sans-serif;">OF</span>
<span class="t" style="left:533.8px;top:334px;font-size:20px;line-height:22px;font-weight:700;color:#13205f;letter-spacing:4.35px;font-family:'Liberation Sans', sans-serif;">PERFORMANCE</span>
<span class="t" style="left:364.0px;top:376px;font-size:19px;line-height:21px;color:#233a7c;letter-spacing:0.58px;font-family:'Liberation Sans', sans-serif;word-spacing:-1.5px;">We are presenting this certificate to</span>
<span class="t" style="left:347.0px;top:540px;font-size:13.6px;line-height:15px;font-weight:700;color:#1c1c1c;letter-spacing:0.39px;font-family:'Liberation Sans', sans-serif;">For the exceptional performance that has led to the</span>
<span class="t" style="left:436.8px;top:563px;font-size:13.6px;line-height:15px;font-weight:700;color:#1c1c1c;letter-spacing:0.16px;font-family:'Liberation Sans', sans-serif;">successful competition of</span>
<span class="t" style="left:318.2px;top:594px;font-size:13.6px;line-height:15px;font-weight:700;color:#1c1c1c;letter-spacing:0.42px;font-family:'Liberation Sans', sans-serif;">“Swimming” held at Aqua club between March 30 to 1 April,</span>
<span class="t" style="left:506.8px;top:617px;font-size:13.6px;line-height:15px;font-weight:700;color:#1c1c1c;letter-spacing:0.38px;font-family:'Liberation Sans', sans-serif;">202x</span>
<span class="t" style="left:476.0px;top:295px;font-size:12px;line-height:14px;font-weight:700;color:#1f2d6e;letter-spacing:0.19px;font-family:'Liberation Sans', sans-serif;">King Stone</span>
<!-- ===== logo + selection + annotations ===== -->
<svg style="left:430px;top:85px" width="620" height="280" viewBox="430 85 620 280">
  <!-- logo crown/shield (coords traced at 8.307x) -->
  <g transform="translate(470 212) scale(.12038)" fill="#161616" stroke="#161616" stroke-linejoin="round" stroke-linecap="round">
    <g stroke="none">
      <circle cx="75" cy="148" r="23"/><circle cx="195" cy="88" r="23"/><circle cx="302" cy="135" r="22"/><circle cx="385" cy="70" r="23"/><circle cx="530" cy="78" r="23"/>
      <!-- back spikes -->
      <path d="M186 95L204 95C215 135 245 170 278 188C262 205 240 222 215 232C200 238 182 242 166 243C182 195 188 140 186 95Z"/>
      <path d="M378 78L393 78C402 125 420 165 452 192C435 205 415 212 398 213C380 205 360 195 342 182C362 150 375 115 378 78Z"/>
    </g>
    <!-- front rim zig-zag -->
    <path d="M75 148C105 185 135 222 158 258" fill="none" stroke-width="22"/>
    <path d="M182 256C225 225 268 185 302 135C330 175 365 205 405 230" fill="none" stroke-width="20"/>
    <path d="M405 232C450 205 500 150 530 78" fill="none" stroke-width="19"/>
    <!-- band -->
    <path d="M150 264C260 262 400 255 505 246" fill="none" stroke-width="19"/>
    <path d="M150 264L186 330" fill="none" stroke-width="19"/>
    <path d="M186 330C290 318 400 308 508 298" fill="none" stroke-width="19"/>
    <!-- shield right edge and bottom curl -->
    <path d="M522 80C532 180 530 300 512 400C495 480 450 560 370 598C330 615 285 612 255 592C232 575 228 545 250 530C270 520 292 530 290 548C275 540 262 548 268 562C285 585 330 585 365 565C440 520 480 430 492 330C500 250 502 160 505 110Z" stroke="none"/>
    <!-- K flourish -->
    <path d="M205 455C205 490 200 520 178 532C165 538 150 532 145 520C160 528 172 520 175 505C178 490 178 470 180 455Z" stroke="none"/>
    <path d="M150 392C170 368 200 352 240 350L236 364C205 368 180 378 150 392Z" stroke="none"/>
    <!-- swirl -->
    <path d="M225 505C265 490 320 495 345 530C355 548 350 570 335 580C340 555 320 530 290 525C265 520 240 522 225 530Z" stroke="none"/>
    <path d="M160 500C180 488 205 488 222 498L218 512C200 505 180 505 160 500Z" stroke="none"/>
  </g>
  <!-- selection frame -->
  <rect x="476" y="217.600" width="61.500" height="69.400" fill="none" stroke="#8a8a8a" stroke-width=".9" stroke-dasharray="1.200 2.200"/>
  <path d="M506.800 205v8" stroke="#a5a5a5" stroke-width="1"/>
  <circle cx="506.800" cy="198.500" r="7" fill="#a3a3a3"/>
  <path d="M509.900 198.700a3.100 3.100 0 1 1-1.200-2.600" fill="none" stroke="#fff" stroke-width="1.400"/><path d="M507.400 194.300l3 .9l-1.200 2.600z" fill="#fff"/>
  <g fill="#fff" stroke="#8c8c8c" stroke-width="1">
    <circle cx="476" cy="217.600" r="4.300"/><circle cx="506.700" cy="217.600" r="4.300"/><circle cx="537.500" cy="217.600" r="4.300"/>
    <circle cx="476" cy="252.300" r="4.300"/><circle cx="537.500" cy="252.300" r="4.300"/>
    <circle cx="476" cy="287" r="4.300"/><circle cx="506.700" cy="287" r="4.300"/><circle cx="537.500" cy="287" r="4.300"/>
  </g>
  <!-- I-beam cursor -->
  <path d="M506.800 243.500v14M505.300 243.500h3M505.300 257.500h3M504.800 250.500h4" stroke="#111" stroke-width="1" fill="none"/>
  <!-- layout options mini icon -->
  <path d="M441.800 241.800h5.400l3 3v7.700h-8.400z" fill="#c6d8f3" stroke="#aac3ea" stroke-width=".8"/><path d="M444 246.300h4.500M444 248.500h4.500M444 250.600h3" stroke="#fff" stroke-width=".8"/>
  <path d="M455.300 246h4.400l-2.200 2.600z" fill="#b5bac2"/>
</svg>
<!-- King script text inside logo -->
<span class="t kg">King</span>

<!-- floating shape buttons -->
<div class="a" style="left:551.4px;top:219.6px;width:13.6px;height:13.6px;border-radius:50%;background:#fff;border:1px solid #c9ccd1"></div>
<div class="a" style="left:554.6px;top:225.8px;width:7.2px;height:1.3px;background:#8a8f98"></div>
<div class="a fb" style="left:547.7px;top:240px"></div>
<div class="a fb" style="left:547.7px;top:270.6px"></div>
<div class="a fb" style="left:547.7px;top:300.8px"></div>
<div class="a fb" style="left:547.7px;top:330.8px"></div>
<svg style="left:548px;top:240px" width="22" height="115" viewBox="548 240 22 115" fill="none" stroke-linecap="round" stroke-linejoin="round">
  <!-- wrap text -->
  <path d="M552.2 244.4h12M552.2 254.2h12M552.2 256.8h12" stroke="#555" stroke-width="1"/>
  <path d="M552.2 246.9h12" stroke="#a5a9b1" stroke-width=".9"/>
  <path d="M552.2 249.3h2.600M552.2 251.600h2.600M561.600 249.300h2.600M561.600 251.600h2.600" stroke="#8a8f98" stroke-width=".9"/>
  <path d="M556.300 252.800v-3l.8.600h2.300l1-1.600v4m-3.300-2.200v2.200" stroke="#3b6fd6" stroke-width="1"/>
  <!-- brush -->
  <path d="M564 276.300c.6.600.6 1.300 0 1.900l-5.600 5.300l-1.900-1.900l5.600-5.300c.6-.6 1.300-.6 1.900 0zM556.500 281.600l1.900 1.900c-.4 1.900-2.700 3.200-5.600 2.700c1.500-.7 1.400-1.800 1.700-2.800c.3-.9 1.100-1.600 2-1.800z" stroke="#5b8de0" stroke-width="1"/>
  <!-- fill -->
  <path d="M557.900 303.600l6 5.600l-6 5.700l-6-5.700z" stroke="#666" stroke-width="1"/>
  <rect x="551.200" y="315.700" width="13.400" height="1.900" fill="#ffe600"/>
  <!-- outline -->
  <path d="M553.400 344v-8.700h9.600v8.700" stroke="#777" stroke-width="1"/><path d="M555.200 344v-6.800h6v6.800" stroke="#b3b7be" stroke-width=".8"/>
  <rect x="551.600" y="345.400" width="13" height="1.400" fill="#1a1aff"/>
</svg>

<!-- red annotation boxes -->
<div class="redbox" style="left:54px;top:5px;width:1023px;height:79.300px"></div>
<div class="redbox" style="left:442px;top:183.500px;width:132.500px;height:120px;border-width:2.2px;border-color:#e6554f"></div>
<div class="redbox" style="left:1049.5px;top:110.8px;width:191.7px;height:336.8px"></div>
<!-- arrows -->
<svg style="left:0;top:0" width="1280" height="665" viewBox="0 0 1280 665" fill="#e8514f">
  <path d="M459.100 183.200L456.800 170.500L459.600 171.200L489.600 86.900L490.400 87.100L465.700 173L468.500 174Z"/>
  <path d="M590.2 262.5L602 256.4L602.1 259.2L1035 241.5L1035 241.9L602.3 265.2L602.4 268Z"/>
</svg>

</div>
</body>
</html>
